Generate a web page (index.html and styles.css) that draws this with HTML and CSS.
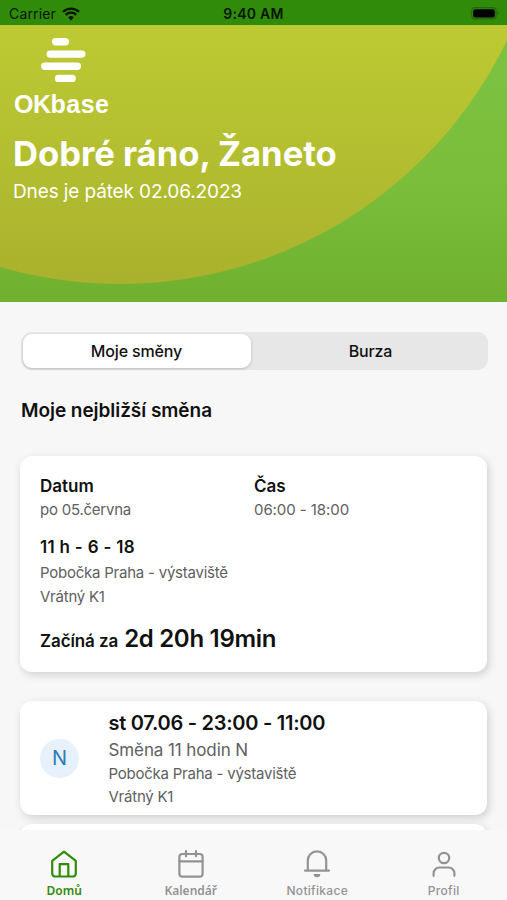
FILE: index.html
```html
<!DOCTYPE html>
<html lang="cs">
<head>
<meta charset="utf-8">
<title>OKbase</title>
<link rel="stylesheet" href="styles.css">
</head>
<body>
<div class="app">
  <div class="status">
    <div class="status-left"><span class="carrier">Carrier</span>
      <svg class="wifi" width="18" height="14" viewBox="0 0 18 14"><path d="M9 13.4 6.2 10.3a4.2 4.2 0 0 1 5.6 0Z" fill="#051500"/><path d="M3.7 7.8a7.7 7.7 0 0 1 10.6 0M1 4.8a11.6 11.6 0 0 1 16 0" fill="none" stroke="#051500" stroke-width="2.3"/></svg>
    </div>
    <div class="clock">9:40 AM</div>
    <svg class="battery" width="29" height="13" viewBox="0 0 29 13"><rect x=".7" y=".7" width="24.4" height="11.2" rx="3.3" fill="none" stroke="#226906" stroke-width="1.2"/><rect x="2.2" y="2.2" width="21.6" height="8.2" rx="2" fill="#000"/><path d="M26.6 4.5v3.6q1.3-.4 1.3-1.8t-1.3-1.8Z" fill="#226906"/></svg>
  </div>
  <header class="hero">
    <svg class="mark" width="44" height="44" viewBox="0 0 44 44" fill="#fff"><rect x="11" y="0" width="17" height="7.4" rx="3.7"/><rect x="5.5" y="12.4" width="39" height="7.4" rx="3.7"/><rect x="0" y="24.6" width="40" height="7.4" rx="3.7"/><rect x="13.8" y="36.8" width="21" height="7.2" rx="3.6"/></svg>
    <div class="brand"><span class="brand-ok">OK</span>base</div>
    <h1 class="greeting">Dobré ráno, Žaneto</h1>
    <div class="today">Dnes je pátek 02.06.2023</div>
  </header>
  <main class="content">
    <div class="tabs"><div class="tab tab-on">Moje směny</div><div class="tab">Burza</div></div>
    <h2 class="heading">Moje nejbližší směna</h2>
    <section class="card next">
      <div class="cols">
        <div><div class="label">Datum</div><div class="value">po 05.června</div></div>
        <div><div class="label">Čas</div><div class="value time">06:00 - 18:00</div></div>
      </div>
      <div class="label shift">11 h - 6 - 18</div>
      <div class="value place">Pobočka Praha - výstaviště</div>
      <div class="value role">Vrátný K1</div>
      <div class="starts"><span class="starts-in">Začíná za</span><span class="countdown">2d 20h 19min</span></div>
    </section>
    <section class="card row">
      <div class="badge">N</div>
      <div>
        <div class="when">st 07.06 - 23:00 - 11:00</div>
        <div class="kind">Směna 11 hodin N</div>
        <div class="value row-place">Pobočka Praha - výstaviště</div>
        <div class="value row-role">Vrátný K1</div>
      </div>
    </section>
    <section class="card following"></section>
  </main>
  <nav class="nav">
    <div class="item active"><svg width="28" height="30" viewBox="0 0 28 30"><path d="M2.2 10.8 14 1.6 25.8 10.8v12.7a3 3 0 0 1-3 3H5.2a3 3 0 0 1-3-3Z"/><path d="M9.7 26V14.2h8.6V26"/></svg><span class="n1">Domů</span></div>
    <div class="item"><svg width="28" height="30" viewBox="0 0 28 30"><rect x="2.4" y="4" width="23.2" height="22.7" rx="3"/><path d="M2.4 11.3h23.2M9 1.2v5M19 1.2v5"/></svg><span class="n2">Kalendář</span></div>
    <div class="item"><svg width="28" height="30" viewBox="0 0 28 30"><path d="M2 20.6h24M4.8 20.4V10.5a9.2 9.2 0 0 1 18.4 0v9.9"/><path class="solid" d="M10.7 24h6.6a3.3 3.3 0 0 1-6.6 0Z"/></svg><span class="n3">Notifikace</span></div>
    <div class="item"><svg width="28" height="30" viewBox="0 0 28 30"><circle cx="14" cy="8" r="5.2"/><path d="M3.6 25.8v-2.6a5.7 5.7 0 0 1 5.7-5.7h9.4a5.7 5.7 0 0 1 5.7 5.7v2.6"/></svg><span class="n4">Profil</span></div>
  </nav>
</div>
</body>
</html>
```
FILE: styles.css
```css
* { box-sizing: border-box; }
body { margin: 0; font-family: Inter, "Liberation Sans", sans-serif; color: #111; background: #f7f7f7; }
h1, h2 { margin: 0; }
.app { width: 507px; height: 900px; display: flex; flex-direction: column; overflow: hidden; white-space: nowrap; }
.status { height: 25px; flex: none; background: #318b0a; color: #051500; display: grid; grid-template-columns: 1fr auto 1fr; align-items: center; padding: 2px 7px 0 9px; font-size: 14px; }
.status-left { display: flex; align-items: center; gap: 6px; }
.carrier { letter-spacing: .15px; }
.clock { font-weight: 600; font-size: 14px; letter-spacing: .25px; margin-left: -2px; }
.battery { justify-self: end; }
.hero { position: relative; height: 277px; flex: none; padding: 13px 14px 0; color: #fff; background: linear-gradient(#7dc242, #7bbe3b 55%, #6fb12f); }
.hero::before { content: ""; position: absolute; inset: 0; background: linear-gradient(#bdca33, #b3bf30 45%, #aab12d 94%); clip-path: circle(429px at 120px -170px); }
.hero > * { position: relative; }
.mark { display: block; margin-left: 26.5px; overflow: visible; }
.brand { font: bold 25px/28px "Liberation Sans", sans-serif; margin-top: 8px; letter-spacing: .5px; }
.brand-ok { letter-spacing: -.5px; }
.greeting { font-size: 34.6px; line-height: 44px; font-weight: 700; margin-top: 13px; margin-left: -1px; }
.today { font-size: 19px; line-height: 24px; margin-top: 5px; margin-left: -1px; letter-spacing: -.12px; }
.content { flex: 1; min-height: 0; overflow: hidden; padding: 30px 20px 0; }
.tabs { height: 38px; display: flex; padding: 2px; border-radius: 11px; background: #e7e7e7; width: 467px; margin-left: .5px; }
.tab { flex: 1; text-align: center; font-size: 16px; line-height: 34px; font-weight: 500; border-radius: 9px; letter-spacing: -.15px; padding-left: 5px; }
.tab-on { flex: 0 0 228px; background: #fff; box-shadow: 0 1px 3px rgba(0,0,0,.2); padding-left: 0; }
.heading { font-size: 19px; line-height: 24px; font-weight: 600; margin: 29px 0 33px 1px; letter-spacing: -.05px; }
.card { width: 467px; margin-left: .4px; background: #fff; border-radius: 12px; box-shadow: 2px 3px 8px rgba(0,0,0,.16); }
.next { height: 216px; padding: 18px 19.6px 0; }
.cols { display: grid; grid-template-columns: 214px 1fr; }
.label { font-size: 17px; line-height: 24px; font-weight: 600; }
.value { font-size: 15px; line-height: 24px; color: #606060; letter-spacing: -.23px; }
.time { letter-spacing: -.07px; }
.shift { margin-top: 13px; letter-spacing: .3px; }
.place { margin-top: 2px; }
.starts { display: flex; gap: 6px; align-items: baseline; margin-top: 14px; line-height: 32px; font-weight: 600; }
.starts-in { font-size: 17px; letter-spacing: -.1px; }
.countdown { font-size: 24px; letter-spacing: -.3px; }
.row { height: 114px; margin-top: 29px; padding: 9px 19.6px 0; display: flex; gap: 29.5px; }
.badge { width: 39px; height: 39px; margin-top: 29px; border-radius: 50%; background: #e6f1fb; color: #2b7db5; font-size: 20px; line-height: 39px; text-align: center; }
.when { font-size: 20px; line-height: 26px; font-weight: 600; letter-spacing: -.27px; }
.kind { font-size: 17px; line-height: 26px; color: #606060; padding-top: 1px; letter-spacing: -.1px; }
.row-place { line-height: 22px; }
.row-role { line-height: 23px; }
.following { height: 114px; margin-top: 9px; }
.nav { flex: none; height: 70px; background: #f8f8f8; display: grid; grid-template-columns: repeat(4, 1fr); padding: 20px 0 0 1px; }
.item { display: flex; flex-direction: column; align-items: center; color: #939393; font: 600 12px/16px "Noto Sans", sans-serif; }
.item svg { flex: none; fill: none; stroke: currentColor; stroke-width: 2.2; stroke-linecap: round; stroke-linejoin: round; }
.item .solid { fill: currentColor; stroke: none; }
.item span { margin-top: 3px; }
.active { color: #318b0a; }
.n3, .n4 { font-family: Inter, sans-serif; font-weight: 500; letter-spacing: .3px; }
```
